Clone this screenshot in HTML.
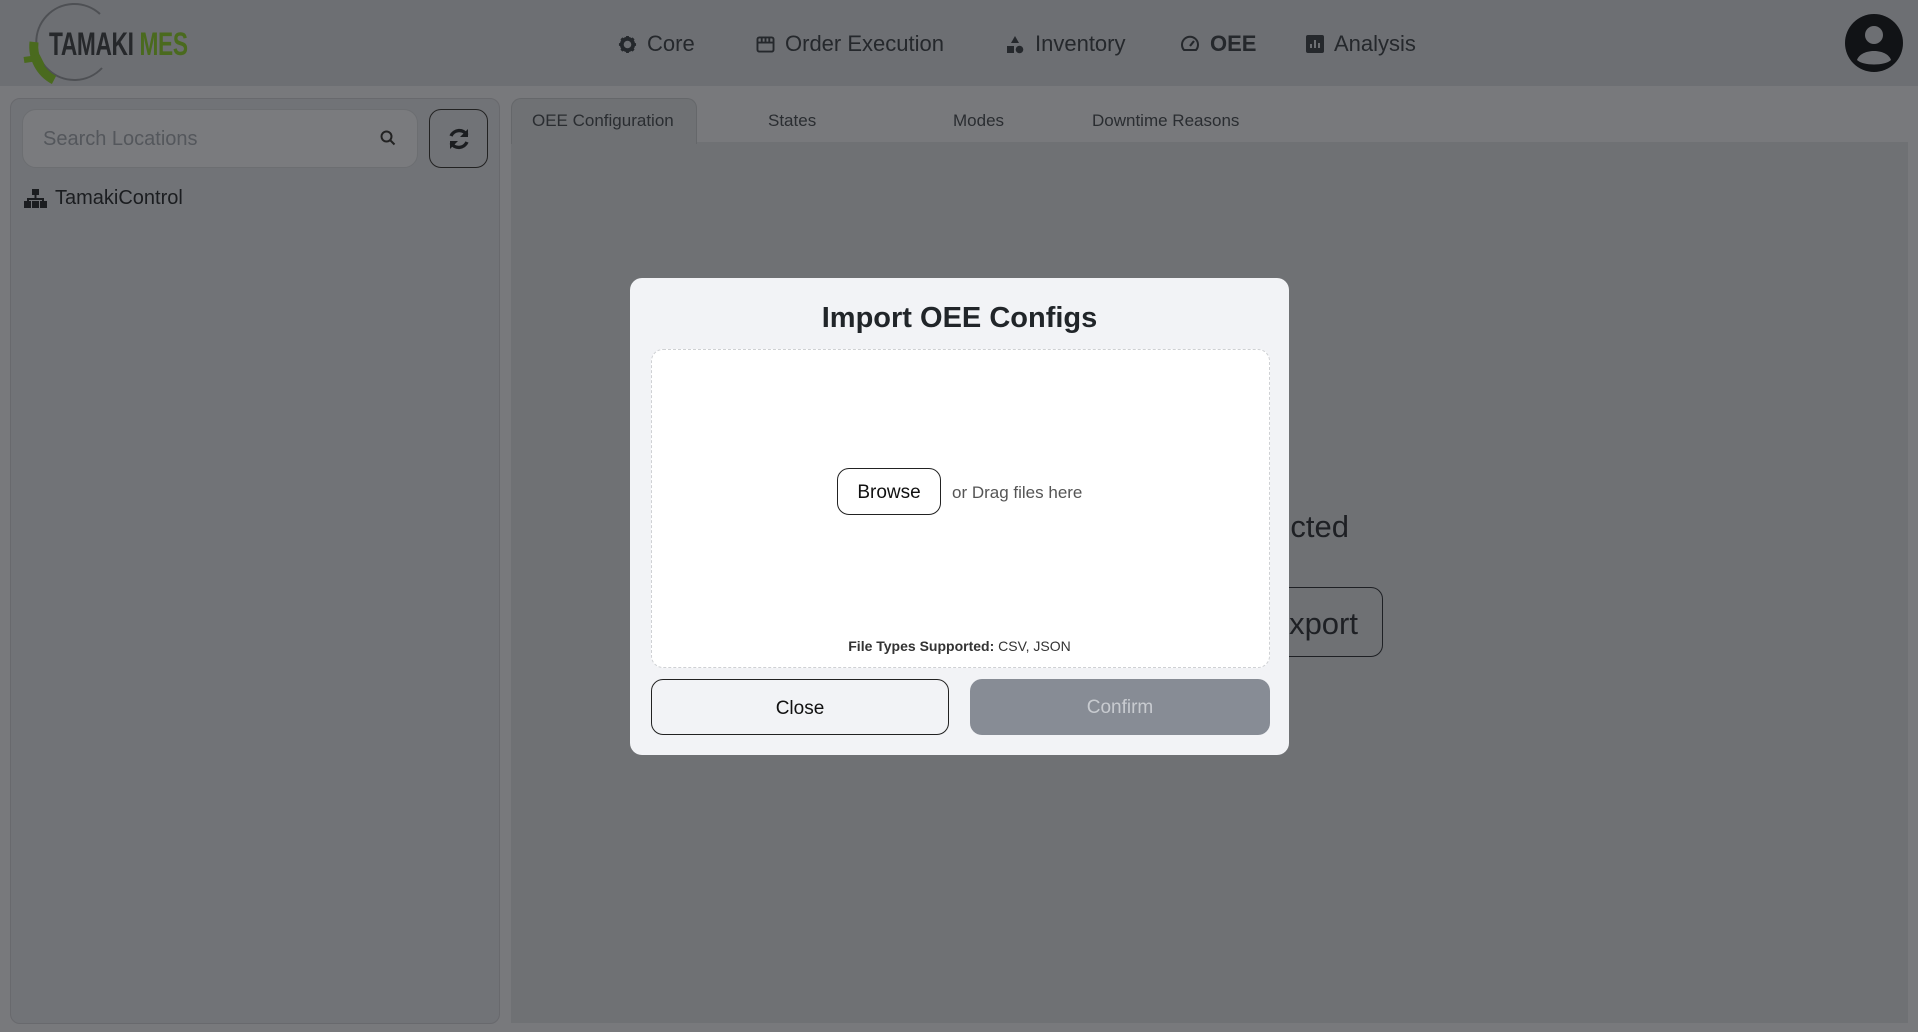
<!DOCTYPE html>
<html><head><meta charset="utf-8"><style>
*{box-sizing:border-box;margin:0;padding:0}
body{width:1918px;height:1032px;overflow:hidden;background:#78797c;font-family:"Liberation Sans",Arial,sans-serif;position:relative}
.hdr{position:absolute;left:0;top:0;width:1918px;height:86px;background:#6d6f73}
.abs{position:absolute}
.nav{position:absolute;top:31px;font-size:22px;color:#25282c;white-space:nowrap;display:flex;align-items:center;gap:10px}
.side{position:absolute;left:10px;top:98px;width:490px;height:926px;background:#717377;border:1px solid #68696d;border-radius:10px}
.search{position:absolute;left:22px;top:109px;width:396px;height:59px;background:#7a7b7e;border:1px solid #6c6e71;border-radius:14px;font-size:20px;color:#54575c;padding:18px 0 0 20px}
.refresh{position:absolute;left:429px;top:109px;width:59px;height:59px;border:1.5px solid #222;border-radius:12px}
.tabs{position:absolute;top:111px;font-size:17px;color:#2a2d31}
.content{position:absolute;left:511px;top:142px;width:1397px;height:881px;background:#6f7174}
.modal{position:absolute;left:630px;top:278px;width:659px;height:477px;background:#f2f3f6;border-radius:12px}
.btn{position:absolute;border-radius:12px;font-size:19px;text-align:center}
</style></head><body>
<div class="hdr"></div>
<svg class="abs" style="left:20px;top:2px" width="100" height="82" viewBox="0 0 100 82">
<path d="M80 12 A38 38 0 1 0 82 66" fill="none" stroke="#4e5054" stroke-width="2"/>
<path d="M14 40 A38 38 0 0 0 34 78" fill="none" stroke="#4a6a1e" stroke-width="9"/>
<path d="M4 58 L18 56 L22 64" fill="none" stroke="#4a6a1e" stroke-width="6"/>
</svg>
<div class="abs" style="left:49px;top:26px;font-size:32px;font-weight:bold;transform:scaleX(0.71);transform-origin:left;white-space:nowrap;letter-spacing:-0.5px"><span style="color:#26282b">TAMAKI</span> <span style="color:#4a6a1e">MES</span></div>

<div class="nav" style="left:618px"><svg width="19" height="19" viewBox="0 0 20 20"><circle cx="10" cy="10" r="6" fill="none" stroke="#25282c" stroke-width="4"/><path d="M10 1v4M10 15v4M1 10h4M15 10h4M3.6 3.6l3 3M13.4 13.4l3 3M3.6 16.4l3-3M13.4 6.6l3-3" stroke="#25282c" stroke-width="3"/></svg>Core</div>
<div class="nav" style="left:756px"><svg width="19" height="17" viewBox="0 0 20 18"><rect x="1.5" y="1.5" width="17" height="15" rx="2" fill="none" stroke="#25282c" stroke-width="2"/><path d="M1.5 7h17M6 1.5v5.5M10 1.5v5.5M14 1.5v5.5" stroke="#25282c" stroke-width="2"/></svg>Order Execution</div>
<div class="nav" style="left:1005px"><svg width="20" height="19" viewBox="0 0 20 19"><path d="M10 1 L14 8 H6Z" fill="#25282c"/><rect x="2" y="11" width="7" height="7" fill="#25282c"/><circle cx="14.5" cy="14.5" r="3.8" fill="#25282c"/></svg>Inventory</div>
<div class="nav" style="left:1180px;font-weight:bold"><svg width="20" height="18" viewBox="0 0 20 18"><path d="M4 15 A8 8 0 1 1 16 15 Z" fill="none" stroke="#25282c" stroke-width="2"/><path d="M10 11 L14 6" stroke="#25282c" stroke-width="2.2"/></svg>OEE</div>
<div class="nav" style="left:1306px"><svg width="18" height="18" viewBox="0 0 18 18"><rect x="0" y="0" width="18" height="18" rx="2" fill="#25282c"/><path d="M5 13V9M9 13V5M13 13V8" stroke="#6d6f73" stroke-width="2"/></svg>Analysis</div>
<svg class="abs" style="left:1845px;top:14px" width="58" height="58" viewBox="0 0 58 58"><circle cx="29" cy="29" r="29" fill="#111316"/><circle cx="29" cy="21" r="9" fill="#6d6f73"/><path d="M12 46 C16 34 42 34 46 46 C40 52 18 52 12 46Z" fill="#6d6f73"/></svg>

<div class="side"></div>
<div class="search">Search Locations</div>
<svg class="abs" style="left:380px;top:130px" width="16" height="16" viewBox="0 0 16 16"><circle cx="6.5" cy="6.5" r="5" fill="none" stroke="#222" stroke-width="2"/><path d="M10 10l4.5 4.5" stroke="#222" stroke-width="2"/></svg>
<div class="refresh"></div>
<svg class="abs" style="left:446px;top:126px" width="26" height="26" viewBox="0 0 26 26"><path d="M21 9 A9 9 0 0 0 5 10" fill="none" stroke="#1b1d20" stroke-width="3.4"/><path d="M22 3v8h-8Z" fill="#1b1d20"/><path d="M5 17 A9 9 0 0 0 21 16" fill="none" stroke="#1b1d20" stroke-width="3.4"/><path d="M4 23v-8h8Z" fill="#1b1d20"/></svg>
<svg class="abs" style="left:24px;top:189px" width="23" height="19" viewBox="0 0 23 19"><rect x="8" y="0" width="7" height="6" fill="#1b1d20"/><path d="M11.5 6v4M4 13v-3h15v3" fill="none" stroke="#1b1d20" stroke-width="2"/><rect x="0" y="12" width="7" height="7" fill="#1b1d20"/><rect x="8" y="12" width="7" height="7" fill="#1b1d20"/><rect x="16" y="12" width="7" height="7" fill="#1b1d20"/></svg>
<div class="abs" style="left:55px;top:187px;font-size:20px;color:#1b1d20">TamakiControl</div>

<div class="content"></div>
<div class="abs" style="left:511px;top:98px;width:186px;height:46px;background:#6f7174;border:1px solid #65676a;border-bottom:none;border-radius:10px 10px 0 0"></div>
<div class="tabs" style="left:532px">OEE Configuration</div>
<div class="tabs" style="left:768px">States</div>
<div class="tabs" style="left:953px">Modes</div>
<div class="tabs" style="left:1092px">Downtime Reasons</div>

<div class="abs" style="left:1100px;top:509px;font-size:31px;color:#1e2024;width:249px;text-align:right">No OEE Selected</div>
<div class="abs" style="left:1150px;top:587px;width:233px;height:70px;border:1.5px solid #1e2024;border-radius:12px"></div>
<div class="abs" style="left:1200px;top:606px;font-size:31px;color:#1e2024;width:158px;text-align:right">Export</div>

<div class="modal">
<div class="abs" style="left:0;width:659px;top:24px;text-align:center;font-size:29px;font-weight:bold;color:#212529">Import OEE Configs</div>
<div class="abs" style="left:21px;top:71px;width:619px;height:319px;background:#fff;border:1px dashed #cfd1d4;border-radius:12px"></div>
<div class="btn" style="left:207px;top:190px;width:104px;height:47px;border:1.3px solid #222;background:#fff;padding-top:13px;color:#111">Browse</div>
<div class="abs" style="left:322px;top:205px;font-size:17px;color:#555">or Drag files here</div>
<div class="abs" style="left:0;width:659px;top:360px;text-align:center;font-size:14px;color:#333"><b>File Types Supported:</b> CSV, JSON</div>
<div class="btn" style="left:21px;top:401px;width:298px;height:56px;border:1.3px solid #222;padding-top:18px;color:#111">Close</div>
<div class="btn" style="left:340px;top:401px;width:300px;height:56px;background:#878c95;padding-top:18px;color:#c8cbd0">Confirm</div>
</div>
</body></html>
